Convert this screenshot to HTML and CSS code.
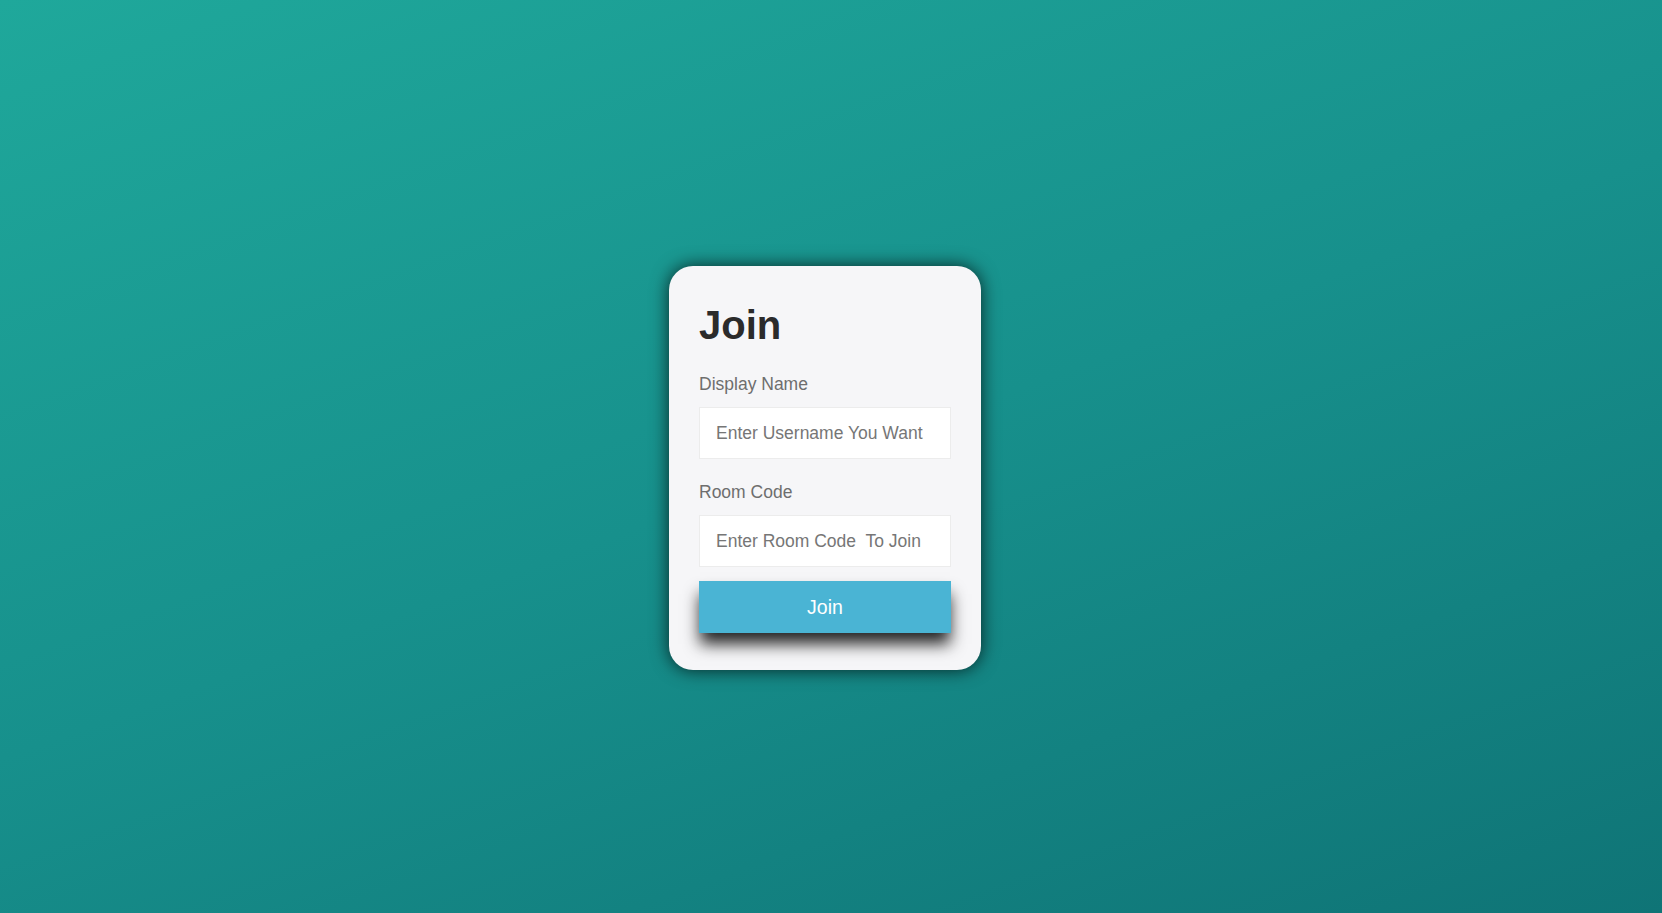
FILE: index.html
```html
<!DOCTYPE html>
<html>
<head>
<meta charset="utf-8">
<title>Join</title>
<link rel="stylesheet" href="styles.css">
</head>
<body>
<div class="card">
  <h1 class="title">Join</h1>
  <label class="label" for="name">Display Name</label>
  <input class="field" id="name" type="text" placeholder="Enter Username You Want">
  <label class="label label-second" for="room">Room Code</label>
  <input class="field" id="room" type="text" placeholder="Enter Room Code  To Join">
  <button class="btn" type="button">Join</button>
</div>
</body>
</html>
```
FILE: styles.css
```css
html, body {
  margin: 0;
  height: 100%;
}
body {
  box-sizing: border-box;
  padding: 23px 12px 0 0;
  display: flex;
  align-items: center;
  justify-content: center;
  background: linear-gradient(160deg, #1fa89b 0%, #17908c 50%, #0f7476 100%);
  font-family: "Liberation Sans", Arial, sans-serif;
}
.card {
  box-sizing: border-box;
  width: 312px;
  padding: 35px 30px 37px;
  background: #f6f6f8;
  border-radius: 24px;
  box-shadow: 0 0 18px rgba(0, 0, 0, 0.75);
  display: flex;
  flex-direction: column;
}
.title {
  margin: 0;
  font-size: 40px;
  line-height: 48px;
  font-weight: bold;
  color: #2b2b2b;
}
.label {
  margin-top: 25px;
  font-size: 17.5px;
  line-height: 21px;
  color: #6e6e6e;
}
.label-second {
  margin-top: 23px;
}
.field {
  box-sizing: border-box;
  margin-top: 12px;
  width: 100%;
  height: 52px;
  padding: 0 16px;
  border: 1px solid #ececec;
  background: #fff;
  font-family: "Liberation Sans", Arial, sans-serif;
  font-size: 17.5px;
  color: #333;
  outline: none;
}
.field::placeholder {
  color: #767676;
}
.btn {
  margin-top: 14px;
  height: 52px;
  width: 100%;
  border: none;
  background: #4ab4d4;
  color: #fff;
  font-family: "Liberation Sans", Arial, sans-serif;
  font-size: 19.5px;
  box-shadow: 0 12px 15px -1px rgba(0, 0, 0, 0.85);
  cursor: pointer;
}
```
